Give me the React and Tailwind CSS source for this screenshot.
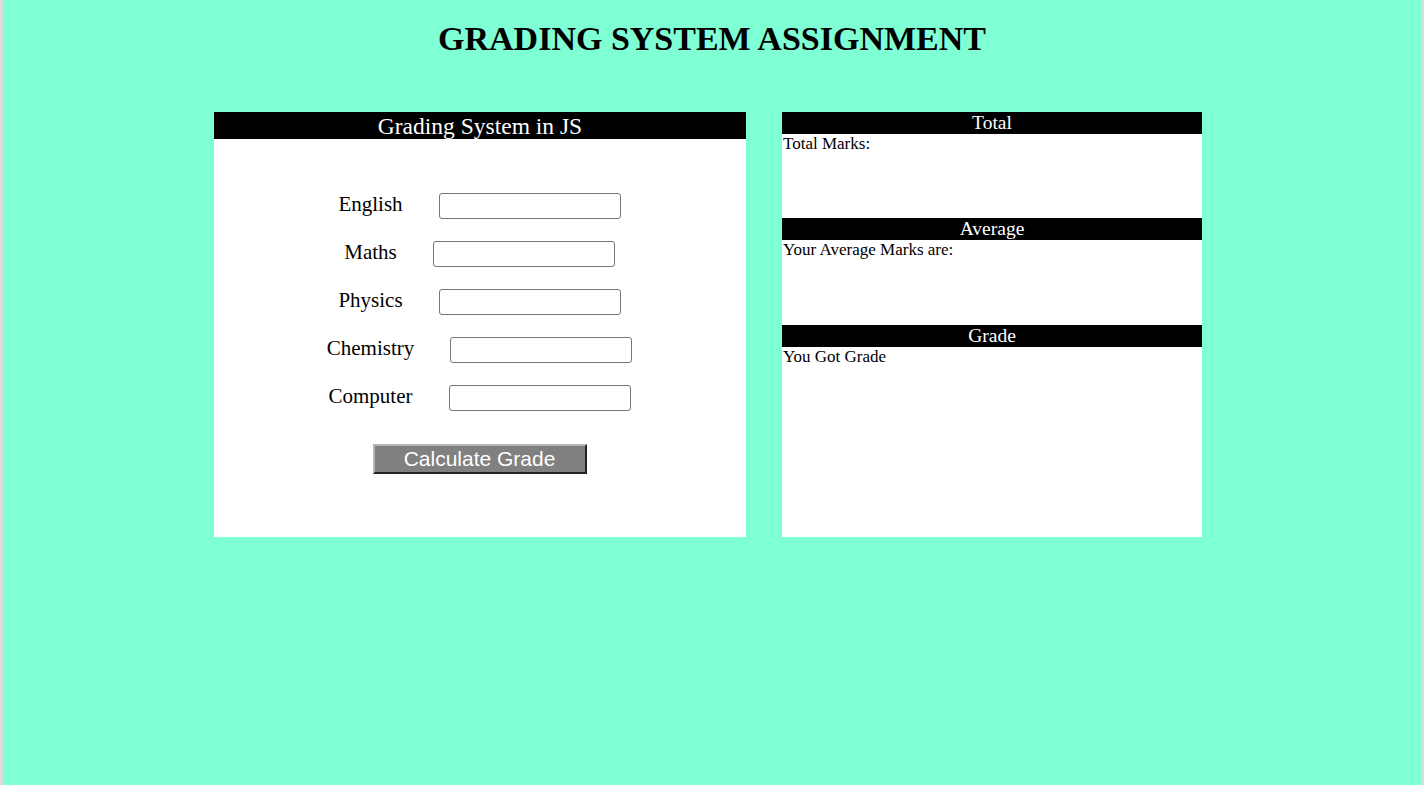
import React from "react";

const subjects = ["English", "Maths", "Physics", "Chemistry", "Computer"];

const Section = ({ title, text, body }) => {
  return (
    <div className="flex flex-col">
      <div className="h-[22px] bg-black text-white text-center text-[19.5px] leading-[22px]">
        {title}
      </div>
      <div className={`${body} text-[17px] leading-[19px] pl-px text-black`}>{text}</div>
    </div>
  );
};

const App = () => {
  return (
    <div
      className="min-h-[785px] bg-[#7fffd4] border-x-[3px] border-[#dcdcdc]"
      style={{ fontFamily: '"Liberation Serif", "Times New Roman", serif' }}
    >
      <h1 className="pt-[19px] text-center text-[34px] leading-[40px] font-bold text-black">
        GRADING SYSTEM ASSIGNMENT
      </h1>

      <div className="flex items-start gap-[36px] pl-[211px] mt-[53px]">
        <div className="w-[532px] h-[425px] bg-white flex flex-col">
          <div className="h-[27px] bg-black text-white text-center text-[23.5px] leading-[28px]">
            Grading System in JS
          </div>
          <div className="flex flex-col items-center pt-[54px] pr-px">
            <div className="flex flex-col gap-[22px]">
              {subjects.map((s) => (
                <div key={s} className="flex justify-center items-start gap-[36px] h-[26px]">
                  <label className="text-[21px] leading-[22px] text-black">{s}</label>
                  <input
                    type="text"
                    className="w-[182px] h-[26px] bg-white border border-[#767676] rounded-[3px]"
                  />
                </div>
              ))}
            </div>
            <button
              className="mt-[33px] w-[214px] h-[30px] bg-[#808080] text-white text-[21px] leading-[24px] border-2 border-t-[#b5b5b5] border-l-[#b5b5b5] border-r-[#222222] border-b-[#222222]"
              style={{ fontFamily: '"Liberation Sans", Arial, sans-serif' }}
            >
              Calculate Grade
            </button>
          </div>
        </div>

        <div className="w-[420px] h-[425px] bg-white flex flex-col">
          <Section title="Total" text="Total Marks:" body="h-[84px]" />
          <Section title="Average" text="Your Average Marks are:" body="h-[85px]" />
          <Section title="Grade" text="You Got Grade" body="h-[190px]" />
        </div>
      </div>
    </div>
  );
};

export default App;
